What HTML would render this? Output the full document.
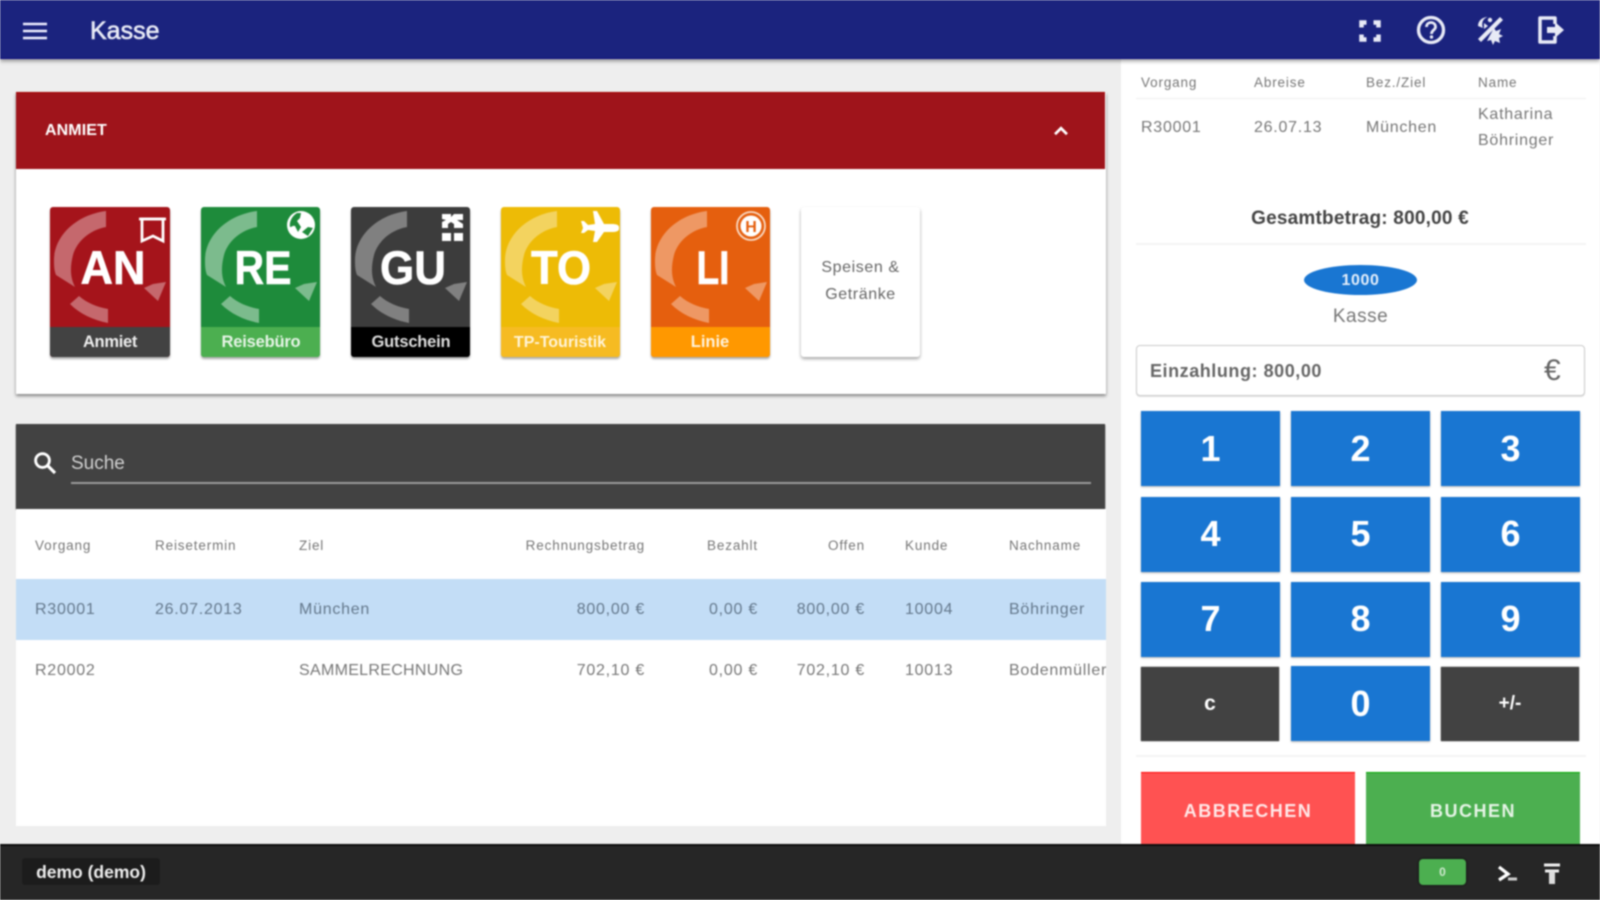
<!DOCTYPE html>
<html lang="de"><head><meta charset="utf-8"><title>Kasse</title>
<style>
html,body{margin:0;padding:0;width:1600px;height:900px;overflow:hidden;background:#eee}
#w{position:relative;width:1600px;height:900px;overflow:hidden;background:#eee;font-family:"Liberation Sans",sans-serif;filter:blur(.7px)}
.a{position:absolute}
.t{position:absolute;white-space:nowrap;line-height:1}
.r{text-align:right}
.c{text-align:center}
.th{font-size:13.5px;color:#777;letter-spacing:.85px;top:539px}
.td{font-size:16px;color:#777;letter-spacing:.75px}
.sel{color:#64788c}
.tile{position:absolute;top:207px;width:119px;height:150px;border-radius:3px;box-shadow:0 2px 2px rgba(0,0,0,.35);overflow:hidden}
.tile svg{position:absolute;left:0;top:0}
.key{position:absolute;width:139px;height:75px;background:#1976d2;color:#fff;font-weight:bold;font-size:36px;display:flex;align-items:center;justify-content:center;box-shadow:0 1px 2px rgba(0,0,0,.3);box-sizing:border-box}
.up{padding-bottom:2px}
.dk{background:#424242;font-size:20px;box-shadow:0 0 1px #000;width:138px;height:74px}
.l{stroke:#fff;stroke-width:.6px}
</style></head><body><div id="w">

<!-- left card -->
<div class="a" style="left:16px;top:92px;width:1090px;height:302px;background:#fff;box-shadow:0 2px 3px rgba(0,0,0,.45)"></div>
<div class="a" style="left:16px;top:92px;width:1089px;height:77px;background:#9f141b;border-top:1px solid #a80000;box-sizing:border-box"></div>
<div class="t" style="left:45px;top:123px;font-size:16px;font-weight:bold;color:#fff;letter-spacing:.1px">ANMIET</div>
<svg class="a" style="left:1050px;top:120px" width="22" height="22" viewBox="0 0 24 24"><path d="M5.500 15.500 12 9l6.500 6.500" fill="none" stroke="#fff" stroke-width="3"/></svg>

<!-- tiles -->
<div class="tile" style="left:50px;width:120px;background:#a5141b"><svg width="120" height="150"><g fill="#fff" fill-opacity=".36"><path d="M56 4C25 8 4 30 4 53c0 5 0 10 2 15l19 12C20 70 20 60 23 48c4-14 17-25 33-28z"/><path d="M20 97l9-8c8 7 18 11 29 13v14c-15-3-28-9-38-19z"/><path d="M94 81l9-4 13-2-8 19z"/></g><text class="l" x="63" y="77" text-anchor="middle" font-size="47" font-weight="bold" fill="#fff" textLength="65" lengthAdjust="spacingAndGlyphs">AN</text><path d="M92 12h21v22l-10-5-11 5z" fill="none" stroke="#fff" stroke-width="2.800"/><path d="M89 12h27" stroke="#fff" stroke-width="2.800"/><rect y="120" width="120" height="30" fill="#424242"/><text x="60" y="140" text-anchor="middle" font-size="16.500" font-weight="bold" fill="#eee" letter-spacing="-.3">Anmiet</text></svg></div>

<div class="tile" style="left:201px;background:#1e8b3b"><svg width="120" height="150"><g fill="#fff" fill-opacity=".42"><path d="M56 4C25 8 4 30 4 53c0 5 0 10 2 15l19 12C20 70 20 60 23 48c4-14 17-25 33-28z"/><path d="M20 97l9-8c8 7 18 11 29 13v14c-15-3-28-9-38-19z"/><path d="M94 81l9-4 13-2-8 19z"/></g><text class="l" x="62" y="77" text-anchor="middle" font-size="47" font-weight="bold" fill="#fff" textLength="57" lengthAdjust="spacingAndGlyphs">RE</text><circle cx="100" cy="18" r="14" fill="#fff"/><path d="M96 6c-5 3-8 9-7 14 2 0 3-2 5-1l3 6 3-5-4-6 3-3 1-5z M101 25l6 4 5-8-5-1z" fill="#1e8b3b"/><rect y="120" width="120" height="30" fill="#4caf50"/><text x="60" y="140" text-anchor="middle" font-size="16.500" font-weight="bold" fill="#e6f4e6" letter-spacing="-.2">Reisebüro</text></svg></div>

<div class="tile" style="left:351px;background:#3c3c3c"><svg width="120" height="150"><g fill="#fff" fill-opacity=".35"><path d="M56 4C25 8 4 30 4 53c0 5 0 10 2 15l19 12C20 70 20 60 23 48c4-14 17-25 33-28z"/><path d="M20 97l9-8c8 7 18 11 29 13v14c-15-3-28-9-38-19z"/><path d="M94 81l9-4 13-2-8 19z"/></g><text class="l" x="62" y="77" text-anchor="middle" font-size="47" font-weight="bold" fill="#fff" textLength="66" lengthAdjust="spacingAndGlyphs">GU</text><g fill="#fff"><rect x="91" y="26" width="9" height="8"/><rect x="103" y="26" width="9" height="8"/><path d="M91 7h9v3l3-3h9v6h-6l6 4v4h-9v-4l-3-2-3 2v4h-6v-6l4-2-4-1z"/></g><rect y="120" width="120" height="30" fill="#000"/><text x="60" y="140" text-anchor="middle" font-size="16.500" font-weight="bold" fill="#ddd" letter-spacing="-.2">Gutschein</text></svg></div>

<div class="tile" style="left:501px;background:#edbb06"><svg width="120" height="150"><g fill="#fff" fill-opacity=".36"><path d="M56 4C25 8 4 30 4 53c0 5 0 10 2 15l19 12C20 70 20 60 23 48c4-14 17-25 33-28z"/><path d="M20 97l9-8c8 7 18 11 29 13v14c-15-3-28-9-38-19z"/><path d="M94 81l9-4 13-2-8 19z"/></g><text class="l" x="60" y="77" text-anchor="middle" font-size="47" font-weight="bold" fill="#fff" textLength="60" lengthAdjust="spacingAndGlyphs">TO</text><path d="M118 20c0-2-3-3-7-3h-8L96 4h-4l2 13-7 1-4-4h-3l2 7-2 5h3l4-3 7 1-2 11h4l7-10h8c4 0 7-1 7-3z" fill="#fff"/><rect y="120" width="120" height="30" fill="#f6bb22"/><text x="59" y="140" text-anchor="middle" font-size="16" font-weight="bold" fill="#fff4d8">TP-Touristik</text></svg></div>

<div class="tile" style="left:651px;background:#e55f0e"><svg width="120" height="150"><g fill="#fff" fill-opacity=".36"><path d="M56 4C25 8 4 30 4 53c0 5 0 10 2 15l19 12C20 70 20 60 23 48c4-14 17-25 33-28z"/><path d="M20 97l9-8c8 7 18 11 29 13v14c-15-3-28-9-38-19z"/><path d="M94 81l9-4 13-2-8 19z"/></g><text class="l" x="62" y="77" text-anchor="middle" font-size="47" font-weight="bold" fill="#fff" textLength="33" lengthAdjust="spacingAndGlyphs">LI</text><circle cx="100" cy="19" r="14" fill="none" stroke="#f9d9c3" stroke-width="1.800"/><circle cx="100" cy="19" r="10.500" fill="#fff"/><text x="100" y="25" text-anchor="middle" font-size="16" font-weight="bold" fill="#e55f0e">H</text><rect y="120" width="120" height="30" fill="#ff9800"/><text x="59" y="140" text-anchor="middle" font-size="16.500" font-weight="bold" fill="#fff3dc">Linie</text></svg></div>

<div class="tile" style="left:801px;background:#fff;box-shadow:0 2px 3px rgba(0,0,0,.35)"></div>
<div class="t c" style="left:801px;top:254px;width:119px;font-size:16px;line-height:27px;color:#666;white-space:normal;letter-spacing:.6px">Speisen &amp; Getränke</div>

<!-- search -->
<div class="a" style="left:16px;top:424px;width:1089px;height:85px;background:#424242;box-shadow:0 1px 1px #000"></div>
<svg class="a" style="left:30px;top:448px" width="30" height="30" viewBox="0 0 24 24"><circle cx="10" cy="10" r="5.500" fill="none" stroke="#fff" stroke-width="2.300"/><path d="M14 14l6 6" stroke="#fff" stroke-width="2.500"/></svg>
<div class="t" style="left:71px;top:454px;font-size:19px;color:#d0d0d0">Suche</div>
<div class="a" style="left:71px;top:482px;width:1020px;height:2px;background:#9a9a9a"></div>

<!-- table -->
<div class="a" style="left:16px;top:509px;width:1090px;height:317px;background:#fff"></div>
<div class="t th" style="left:35px">Vorgang</div>
<div class="t th" style="left:155px">Reisetermin</div>
<div class="t th" style="left:299px">Ziel</div>
<div class="t th r" style="left:445px;width:200px">Rechnungsbetrag</div>
<div class="t th r" style="left:658px;width:100px">Bezahlt</div>
<div class="t th r" style="left:765px;width:100px">Offen</div>
<div class="t th" style="left:905px">Kunde</div>
<div class="t th" style="left:1009px">Nachname</div>

<div class="a" style="left:16px;top:579px;width:1090px;height:61px;background:#c3ddf6"></div>
<div class="t td sel" style="left:35px;top:602px">R30001</div>
<div class="t td sel" style="left:155px;top:602px">26.07.2013</div>
<div class="t td sel" style="left:299px;top:602px">München</div>
<div class="t td sel r" style="left:445px;width:200px;top:602px">800,00 €</div>
<div class="t td sel r" style="left:658px;width:100px;top:602px">0,00 €</div>
<div class="t td sel r" style="left:765px;width:100px;top:602px">800,00 €</div>
<div class="t td sel" style="left:905px;top:602px">10004</div>
<div class="t td sel" style="left:1009px;top:602px">Böhringer</div>

<div class="t td" style="left:35px;top:663px">R20002</div>
<div class="t td" style="left:299px;top:663px;letter-spacing:.3px">SAMMELRECHNUNG</div>
<div class="t td r" style="left:445px;width:200px;top:663px">702,10 €</div>
<div class="t td r" style="left:658px;width:100px;top:663px">0,00 €</div>
<div class="t td r" style="left:765px;width:100px;top:663px">702,10 €</div>
<div class="t td" style="left:905px;top:663px">10013</div>
<div class="a" style="left:1009px;top:655px;width:97px;height:30px;overflow:hidden"><div class="t td" style="left:0;top:8px">Bodenmüller</div></div>

<!-- right panel -->
<div class="a" style="left:1121px;top:59px;width:479px;height:785px;background:#fff"></div>
<div class="t th" style="left:1141px;top:76px">Vorgang</div>
<div class="t th" style="left:1254px;top:76px">Abreise</div>
<div class="t th" style="left:1366px;top:76px">Bez./Ziel</div>
<div class="t th" style="left:1478px;top:76px">Name</div>
<div class="a" style="left:1136px;top:98px;width:450px;height:1px;background:#eee"></div>
<div class="t td" style="left:1141px;top:120px">R30001</div>
<div class="t td" style="left:1254px;top:120px">26.07.13</div>
<div class="t td" style="left:1366px;top:120px">München</div>
<div class="t td" style="left:1478px;top:102px;line-height:26px">Katharina<br>Böhringer</div>
<div class="t c" style="left:1136px;width:448px;top:209px;font-size:19px;font-weight:bold;color:#444;letter-spacing:.2px">Gesamtbetrag: 800,00 €</div>
<div class="a" style="left:1136px;top:243px;width:450px;height:2px;background:#f4f4f4"></div>
<div class="a" style="left:1304px;top:265px;width:113px;height:30px;background:#1976d2;border-radius:50%"></div>
<div class="t c" style="left:1304px;top:273px;width:113px;font-size:16px;font-weight:bold;color:#e4eefa;letter-spacing:.6px">1000</div>
<div class="t c" style="left:1304px;top:307px;width:113px;font-size:19px;color:#777;letter-spacing:.5px">Kasse</div>
<div class="a" style="left:1136px;top:345px;width:449px;height:51px;background:#fff;border:1px solid #ccc;border-radius:4px;box-sizing:border-box;box-shadow:0 1px 1px rgba(0,0,0,.12)"></div>
<div class="t" style="left:1150px;top:362px;font-size:18px;font-weight:bold;color:#666;letter-spacing:.55px">Einzahlung: 800,00</div>
<div class="t" style="left:1544px;top:356px;font-size:30px;color:#666">€</div>

<div class="key" style="left:1141px;top:411px">1</div>
<div class="key" style="left:1291px;top:411px">2</div>
<div class="key" style="left:1441px;top:411px">3</div>
<div class="key up" style="left:1141px;top:497px">4</div>
<div class="key up" style="left:1291px;top:497px">5</div>
<div class="key up" style="left:1441px;top:497px">6</div>
<div class="key up" style="left:1141px;top:582px">7</div>
<div class="key up" style="left:1291px;top:582px">8</div>
<div class="key up" style="left:1441px;top:582px">9</div>
<div class="key dk" style="left:1141px;top:667px;font-size:21px">c</div>
<div class="key" style="left:1291px;top:666px">0</div>
<div class="key dk" style="left:1441px;top:667px;font-size:19px">+/-</div>
<div class="a" style="left:1136px;top:755px;width:450px;height:2px;background:#f4f4f4"></div>
<div class="a" style="left:1141px;top:772px;width:214px;height:75px;background:#ff5252;border-top:1px solid #f00;box-sizing:border-box"></div>
<div class="a" style="left:1366px;top:772px;width:214px;height:75px;background:#4caf50;border-top:1px solid #0a0;box-sizing:border-box"></div>
<div class="t c" style="left:1141px;top:802px;width:214px;font-size:18px;font-weight:bold;color:#ffe8e8;letter-spacing:1.500px">ABBRECHEN</div>
<div class="t c" style="left:1366px;top:802px;width:214px;font-size:18px;font-weight:bold;color:#e6f4e6;letter-spacing:1.500px">BUCHEN</div>

<!-- top bar -->
<div class="a" style="left:0;top:0;width:1600px;height:59px;background:#1b237e;border-bottom:1px solid #0c0c80;box-sizing:border-box;box-shadow:0 2px 4px rgba(0,0,0,.4)"></div>
<svg class="a" style="left:22px;top:20px" width="26" height="22"><path d="M1 4h24M1 11h24M1 18h24" stroke="#eef" stroke-width="2.500"/></svg>
<div class="t" style="left:90px;top:19px;font-size:25px;color:#e8eaf6;-webkit-text-stroke:.6px #e8eaf6">Kasse</div>
<svg class="a" style="left:1359px;top:20px" width="22" height="22" viewBox="0 0 22 22"><g fill="none" stroke="#e8eaf6" stroke-width="4.500"><path d="M2.500 7.500v-5h5M14.500 2.500h5v5M19.500 14.500v5h-5M7.500 19.500h-5v-5"/></g></svg>
<svg class="a" style="left:1415px;top:15px" width="32" height="30" viewBox="0 0 32 30"><circle cx="16" cy="15" r="12.500" fill="none" stroke="#e8eaf6" stroke-width="3.300"/><path d="M11.500 12c0-6 9-6 9 0 0 3-4 3-4 7" fill="none" stroke="#e8eaf6" stroke-width="2.800"/><circle cx="16.500" cy="22" r="1.700" fill="#e8eaf6"/></svg>
<svg class="a" style="left:1475px;top:15px" width="30" height="30" viewBox="0 0 30 30"><g fill="#e8eaf6"><path d="M25 2l3 3L6 27l-3-3z"/><path d="M19 13l2 3 5-2-2 5 4 2-4 2 1 5-5-2-2 4-2-5-4 1 2-4z"/><path d="M13 2C8 3 6 8 8 13l-5-2C3 6 7 2 13 2z"/><circle cx="15" cy="5" r="2.200"/><path d="M9 8l4 3-4 3z"/></g></svg>
<svg class="a" style="left:1537px;top:15px" width="30" height="30" viewBox="0 0 30 30"><path d="M18 9V3H3v24h15v-6" fill="none" stroke="#e8eaf6" stroke-width="3.500" stroke-linejoin="round"/><path d="M10 12h8V7l9 8-9 8v-5h-8z" fill="#e8eaf6"/></svg>

<!-- bottom bar -->
<div class="a" style="left:0;top:844px;width:1600px;height:56px;background:#262626;border-top:2px solid #0d0d0d;box-sizing:border-box"></div>
<div class="a" style="left:22px;top:858px;width:138px;height:27px;background:#1c1c1c;border-radius:3px"></div>
<div class="t c" style="left:22px;top:864px;width:138px;font-size:17.500px;font-weight:bold;color:#eee">demo (demo)</div>
<div class="a" style="left:1419px;top:859px;width:47px;height:26px;background:#4caf50;border-radius:4px;box-shadow:0 0 2px #000"></div>
<div class="t c" style="left:1419px;top:866px;width:47px;font-size:12px;font-weight:bold;color:#cfe9cf">0</div>
<svg class="a" style="left:1497px;top:864px" width="24" height="20" viewBox="0 0 24 20"><path d="M2 3l9 7-9 6" fill="none" stroke="#fff" stroke-width="3.300"/><path d="M11 15h9" stroke="#ccc" stroke-width="3"/></svg>
<svg class="a" style="left:1541px;top:862px" width="22" height="24" viewBox="0 0 22 24"><path d="M3 3h16" stroke="#eee" stroke-width="3"/><path d="M4 9h14" stroke="#eee" stroke-width="3"/><path d="M11 9v13" stroke="#ddd" stroke-width="6"/></svg>

</div></body></html>
